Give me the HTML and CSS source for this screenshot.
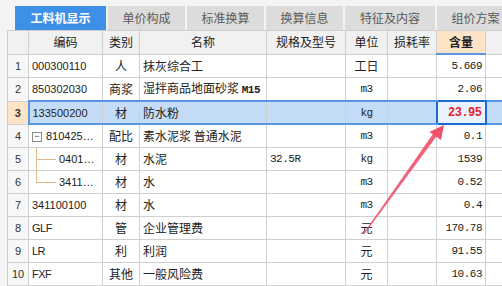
FILE: index.html
```html
<!DOCTYPE html>
<html>
<head>
<meta charset="utf-8">
<link rel="stylesheet" href="styles.css">
</head>
<body>
<div class="panel">
  <div class="tabs">
    <div class="tab active">工料机显示</div>
    <div class="tab">单价构成</div>
    <div class="tab">标准换算</div>
    <div class="tab">换算信息</div>
    <div class="tab wide">特征及内容</div>
    <div class="tab">组价方案</div>
  </div>
  <div class="grid-wrap">
    <table class="grid">
      <colgroup>
        <col class="c-no"><col class="c-code"><col class="c-type"><col class="c-name"><col class="c-spec"><col class="c-unit"><col class="c-loss"><col class="c-qty"><col class="c-rest">
      </colgroup>
      <thead>
        <tr>
          <th></th><th>编码</th><th>类别</th><th>名称</th><th>规格及型号</th><th>单位</th><th>损耗率</th><th class="hq">含量</th><th></th>
        </tr>
      </thead>
      <tbody>
        <tr><td class="no">1</td><td class="code">000300110</td><td class="type">人</td><td class="name">抹灰综合工</td><td></td><td class="unit">工日</td><td></td><td class="qty">5.669</td><td></td></tr>
        <tr><td class="no">2</td><td class="code">850302030</td><td class="type">商浆</td><td class="name">湿拌商品地面砂浆 <span class="mono b">M15</span></td><td></td><td class="unit mono">m3</td><td></td><td class="qty">2.06</td><td></td></tr>
        <tr class="sel"><td class="no selno">3</td><td class="code first">133500200</td><td class="type">材</td><td class="name">防水粉</td><td></td><td class="unit mono">kg</td><td></td><td class="qty cur">23.95</td><td class="last"></td></tr>
        <tr><td class="no">4</td><td class="code tree"><span class="tbox">−</span><span class="tcode">810425…</span></td><td class="type">配比</td><td class="name">素水泥浆 普通水泥</td><td></td><td class="unit mono">m3</td><td></td><td class="qty">0.1</td><td></td></tr>
        <tr><td class="no">5</td><td class="code tree"><span class="branch"><span class="bt"></span><span class="bb"></span></span><span class="tcode">0401…</span></td><td class="type">材</td><td class="name">水泥</td><td class="spec mono">32.5R</td><td class="unit mono">kg</td><td></td><td class="qty">1539</td><td></td></tr>
        <tr><td class="no">6</td><td class="code tree"><span class="branch end"><span class="bt"></span><span class="bb"></span></span><span class="tcode">3411…</span></td><td class="type">材</td><td class="name">水</td><td></td><td class="unit mono">m3</td><td></td><td class="qty">0.52</td><td></td></tr>
        <tr><td class="no">7</td><td class="code">341100100</td><td class="type">材</td><td class="name">水</td><td></td><td class="unit mono">m3</td><td></td><td class="qty">0.4</td><td></td></tr>
        <tr><td class="no">8</td><td class="code mono">GLF</td><td class="type">管</td><td class="name">企业管理费</td><td></td><td class="unit">元</td><td></td><td class="qty">170.78</td><td></td></tr>
        <tr><td class="no">9</td><td class="code mono">LR</td><td class="type">利</td><td class="name">利润</td><td></td><td class="unit">元</td><td></td><td class="qty">91.55</td><td></td></tr>
        <tr><td class="no">10</td><td class="code mono">FXF</td><td class="type">其他</td><td class="name">一般风险费</td><td></td><td class="unit">元</td><td></td><td class="qty">10.63</td><td></td></tr>
      </tbody>
    </table>
    <svg class="arrow" width="502" height="286" viewBox="0 0 502 286">
      <polygon points="363,234 364.2,234.6 437.5,135 434,132.6" fill="#f0506a" opacity="0.9"/>
      <polygon points="444,125 429.5,132 441,140" fill="#f0506a"/>
    </svg>
  </div>
</div>
</body>
</html>
```
FILE: styles.css
```css
html, body {
  margin: 0;
  padding: 0;
}
body {
  width: 502px;
  height: 286px;
  overflow: hidden;
  background: #f4f4f4;
  font-family: "Noto Sans CJK SC", "Liberation Sans", sans-serif;
  font-size: 12px;
  color: #222;
}
.panel {
  display: flex;
  flex-direction: column;
  padding-top: 6px;
}
.tabs {
  display: flex;
  gap: 2px;
  padding-left: 15px;
  height: 24px;
}
.tab {
  width: 77px;
  flex: none;
  background: #dcdcdc;
  color: #5a5a5a;
  font-size: 12px;
  line-height: 24px;
  text-align: center;
  white-space: nowrap;
}
.tab.active {
  width: 91px;
  background: #3d8fe8;
  color: #fff;
  font-weight: bold;
}
.tab.wide {
  width: 90px;
}
.grid-wrap {
  position: relative;
  margin-left: 7px;
  width: 495px;
  overflow: hidden;
}
.grid {
  border-collapse: collapse;
  table-layout: fixed;
  width: 500px;
  background: #fff;
}
.c-no { width: 21px; }
.c-code { width: 74px; }
.c-type { width: 37px; }
.c-name { width: 127px; }
.c-spec { width: 79px; }
.c-unit { width: 42px; }
.c-loss { width: 49px; }
.c-qty { width: 49px; }
.c-rest { width: 22px; }
.grid th, .grid td {
  border: 1px solid #cfcfcf;
  padding: 0;
  height: 22px;
  line-height: 16px;
  white-space: nowrap;
  overflow: hidden;
}
.grid th {
  background: #f1f1f1;
  font-weight: normal;
  font-size: 12px;
  color: #222;
  height: 22px;
}
.grid th.hq {
  background: #fde4c6;
  font-weight: bold;
  border-bottom: 2px solid #5a96e3;
}
.grid td.no {
  background: #f7f7f7;
  text-align: center;
  font-family: "Liberation Sans", sans-serif;
  font-size: 11px;
  color: #333;
}
.grid td.code {
  padding-left: 3px;
  font-family: "Liberation Sans", sans-serif;
  font-size: 11px;
}
.grid td.type, .grid td.unit {
  text-align: center;
}
.grid td.name {
  padding-left: 3px;
}
.grid td.spec {
  padding-left: 3px;
}
.grid td.qty {
  text-align: right;
  padding-right: 3px;
  font-family: "Liberation Mono", monospace;
  font-size: 11px;
  letter-spacing: -0.5px;
}
.mono {
  font-family: "Liberation Mono", monospace;
  font-size: 11px;
  letter-spacing: -0.5px;
}
.b {
  font-weight: bold;
}
.grid tr.sel td {
  height: 21px;
  background: #c5dcf8;
  border-top: 2px solid #5a96e3;
  border-bottom: 2px solid #5a96e3;
}
.grid tr.sel td.selno {
  background: #fde4c6;
  font-weight: bold;
  border-top: 1px solid #cfcfcf;
  border-bottom: 1px solid #cfcfcf;
}
.grid tr.sel td.first {
  border-left: 2px solid #5a96e3;
}
.grid tr.sel td.cur {
  background: #eaf3fd;
  border: 2px solid #1b6ad2;
  color: #e0222c;
  font-weight: bold;
  font-size: 12px;
}
.grid td.tree {
  padding-left: 0;
}
.grid td.tree > * {
  vertical-align: middle;
}
.tbox {
  display: inline-flex;
  align-items: center;
  justify-content: center;
  box-sizing: border-box;
  width: 10px;
  height: 10px;
  margin-left: 3px;
  margin-right: 4px;
  border: 1px solid #8a8a8a;
  font-size: 9px;
  line-height: 1;
  color: #444;
  background: #fff;
}
.branch {
  display: inline-flex;
  flex-direction: column;
  width: 20px;
  height: 22px;
  margin-left: 7px;
  margin-right: 3px;
}
.bt {
  flex: 1;
  border-left: 1px solid #e2b98b;
  border-bottom: 1px solid #e2b98b;
}
.bb {
  flex: 1;
  border-left: 1px solid #e2b98b;
}
.branch.end .bb {
  border-left-color: transparent;
}
.arrow {
  position: absolute;
  left: -7px;
  top: -30px;
  pointer-events: none;
}
```
